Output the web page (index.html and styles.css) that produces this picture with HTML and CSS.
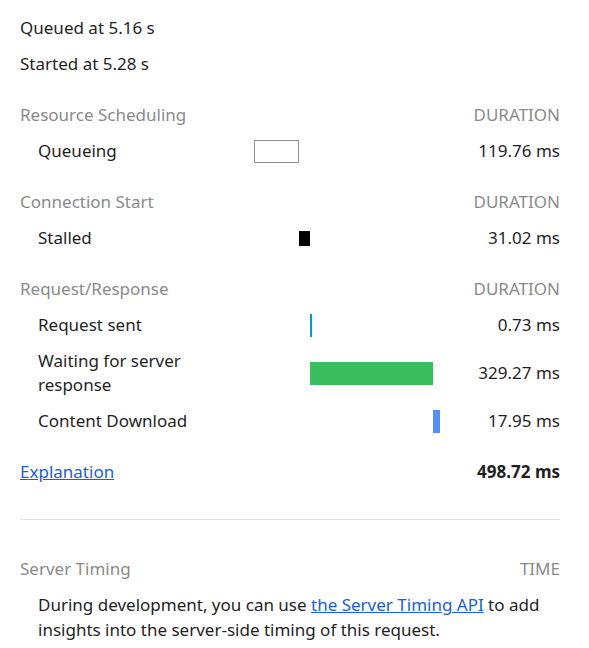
FILE: index.html
```html
<!DOCTYPE html>
<html lang="en">
<head>
    <meta charset="UTF-8">
    <meta name="viewport" content="width=device-width, initial-scale=1.0">
    <title>Timing</title>
    <link rel="stylesheet" href="styles.css">
</head>
<body>
    <div class="timing-panel">
        <div class="line">Queued at 5.16 s</div>
        <div class="line">Started at 5.28 s</div>

        <!-- Resource Scheduling -->
        <div class="section-head">
            <span>Resource Scheduling</span>
            <span class="col-label">DURATION</span>
        </div>
        <div class="row">
            <div class="name">Queueing</div>
            <div class="bar-area">
                <div class="bar bar-queueing" style="margin-left: 0px; width: 45px;"></div>
            </div>
            <div class="duration">119.76 ms</div>
        </div>

        <!-- Connection Start -->
        <div class="section-head">
            <span>Connection Start</span>
            <span class="col-label">DURATION</span>
        </div>
        <div class="row">
            <div class="name">Stalled</div>
            <div class="bar-area">
                <div class="bar bar-stalled" style="margin-left: 45px; width: 11px;"></div>
            </div>
            <div class="duration">31.02 ms</div>
        </div>

        <!-- Request/Response -->
        <div class="section-head">
            <span>Request/Response</span>
            <span class="col-label">DURATION</span>
        </div>
        <div class="row">
            <div class="name">Request sent</div>
            <div class="bar-area">
                <div class="bar bar-sending" style="margin-left: 56px; width: 2px;"></div>
            </div>
            <div class="duration">0.73 ms</div>
        </div>
        <div class="row">
            <div class="name">Waiting for server response</div>
            <div class="bar-area">
                <div class="bar bar-waiting" style="margin-left: 56px; width: 123px;"></div>
            </div>
            <div class="duration">329.27 ms</div>
        </div>
        <div class="row">
            <div class="name">Content Download</div>
            <div class="bar-area">
                <div class="bar bar-download" style="margin-left: 179px; width: 7px;"></div>
            </div>
            <div class="duration">17.95 ms</div>
        </div>

        <div class="total-row">
            <a href="#" class="link">Explanation</a>
            <span class="total">498.72 ms</span>
        </div>

        <hr class="divider">

        <!-- Server Timing -->
        <div class="section-head server-head">
            <span>Server Timing</span>
            <span class="col-label">TIME</span>
        </div>
        <p class="note">During development, you can use <a href="#" class="link">the Server Timing API</a> to add insights into the server-side timing of this request.</p>
    </div>
</body>
</html>
```

FILE: styles.css
```css
body {
    margin: 0;
    background-color: #ffffff;
    font-family: "Noto Sans", "Open Sans", sans-serif;
    font-size: 17px;
    color: #1f1f1f;
}
.timing-panel {
    width: 540px;
    padding: 10px 0 0 20px;
}
.line {
    line-height: 24px;
    padding: 6px 0;
}
/* Section headers */
.section-head {
    display: flex;
    justify-content: space-between;
    line-height: 24px;
    padding: 6px 0;
    margin-top: 15px;
    color: #8a8a8a;
}
.col-label {
    text-transform: uppercase;
}
/* Timing rows */
.row {
    display: flex;
    align-items: center;
    padding: 6px 0 6px 18px;
    line-height: 24px;
}
.name {
    width: 172px;
    margin-right: 44px;
}
.bar-area {
    width: 187px;
    display: flex;
}
.bar {
    height: 23px;
    box-sizing: border-box;
}
.bar-queueing {
    border: 1px solid #8f8f8f;
    background-color: #ffffff;
}
.bar-stalled {
    height: 15px;
    background-color: #000000;
}
.bar-sending {
    background-color: #00a0c6;
}
.bar-waiting {
    background-color: #3abf5e;
}
.bar-download {
    background-color: #5290f5;
}
.duration {
    flex: 1;
    text-align: right;
}
/* Total */
.total-row {
    display: flex;
    justify-content: space-between;
    line-height: 24px;
    padding: 6px 0;
    margin-top: 15px;
}
.total {
    font-weight: bold;
}
.link {
    color: #1a5fd6;
    text-decoration: underline;
}
.divider {
    border: none;
    border-top: 1px solid #d3e3fd;
    margin: 29px 0 31px 0;
}
.server-head {
    margin-top: 0;
}
.note {
    margin: 0;
    padding: 6px 0 0 18px;
    line-height: 24.5px;
}
```
